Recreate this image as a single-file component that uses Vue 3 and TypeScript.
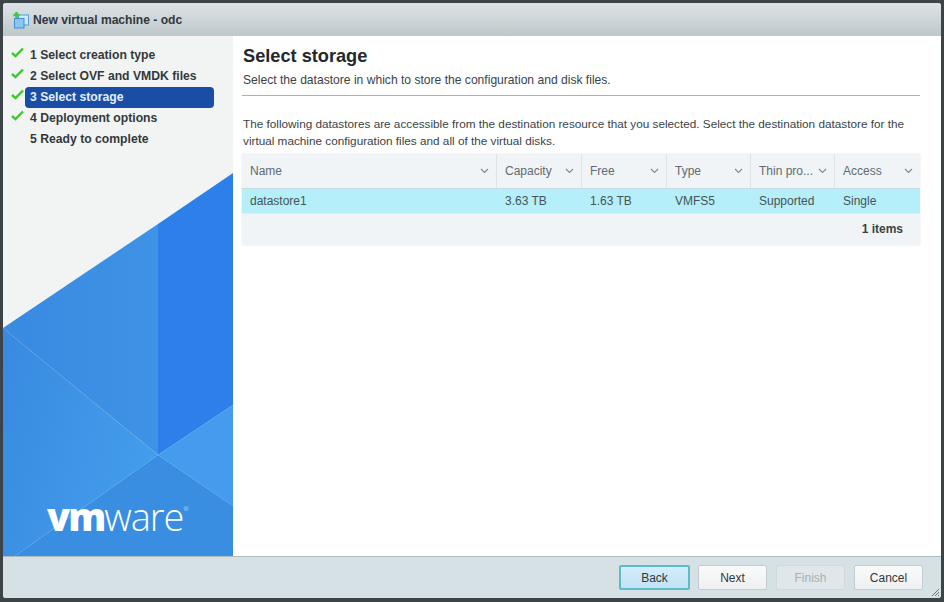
<template>
  <div class="page">
    <div class="dialog">
      <header class="title-bar">
        <svg class="vm-icon" width="20" height="20" viewBox="0 0 20 20">
          <rect x="7.5" y="5" width="10" height="10" fill="#cfe8fa" stroke="#4a9fdc" stroke-width="1" />
          <rect x="3.5" y="8.5" width="9.5" height="9.5" fill="#8cc6f0" stroke="#3d8fd0" stroke-width="1" />
          <path d="M5.5 2v6M2.5 5h6" stroke="#45c43f" stroke-width="2.4" />
        </svg>
        <span class="title-text">New virtual machine - odc</span>
      </header>

      <div class="main">
        <aside class="sidebar">
          <svg class="sidebar-art" viewBox="0 0 230 520" preserveAspectRatio="none">
            <defs>
              <linearGradient id="upperFill" x1="0" y1="0" x2="1" y2="0">
                <stop offset="0" stop-color="#378ae0" />
                <stop offset="1" stop-color="#3f93e6" />
              </linearGradient>
              <linearGradient id="lowerFill" x1="0" y1="0" x2="1" y2="0.4">
                <stop offset="0" stop-color="#378ae0" />
                <stop offset="1" stop-color="#449cec" />
              </linearGradient>
            </defs>
            <polygon points="0,292 155,188 155,419" fill="url(#upperFill)" />
            <polygon points="0,292 155,419 12,520 0,520" fill="url(#lowerFill)" />
            <polygon points="155,188 230,137 230,369 155,419" fill="#2d7fea" />
            <polygon points="155,419 230,369 230,470" fill="#459cee" />
            <polygon points="155,419 230,470 230,520 12,520" fill="#3a8ee2" />
          </svg>
          <ol class="steps">
            <li v-for="step in steps" :key="step.label" class="step">
              <svg v-if="step.done" class="check" width="13" height="11" viewBox="0 0 13 11">
                <path d="M1 6l3.5 3.2L12 1.5" fill="none" stroke="#3fc72e" stroke-width="2.4" />
              </svg>
              <span v-else class="check-space"></span>
              <span class="step-label" :class="{ active: step.active }">{{ step.label }}</span>
            </li>
          </ol>
          <div class="logo"><b>vm</b>ware<sup>®</sup></div>
        </aside>

        <section class="content">
          <h2>Select storage</h2>
          <p class="subtitle">Select the datastore in which to store the configuration and disk files.</p>
          <p class="intro">
            The following datastores are accessible from the destination resource that you selected. Select the destination datastore for the virtual machine configuration files and all of the virtual disks.
          </p>
          <div class="table">
            <div class="row head">
              <div v-for="col in columns" :key="col" class="cell">
                <span class="col-name">{{ col }}</span>
                <svg width="9" height="6" viewBox="0 0 9 6">
                  <path d="M1 1l3.5 3.5L8 1" fill="none" stroke="#7b8a90" stroke-width="1.1" />
                </svg>
              </div>
            </div>
            <div class="row selected">
              <div v-for="val in datastore" :key="val" class="cell">{{ val }}</div>
            </div>
            <div class="table-foot">1 items</div>
          </div>
        </section>
      </div>

      <footer class="footer">
        <button class="btn primary">Back</button>
        <button class="btn">Next</button>
        <button class="btn" disabled>Finish</button>
        <button class="btn">Cancel</button>
        <svg class="grip" width="9" height="9" viewBox="0 0 9 9">
          <path d="M1 8l7-7M4 8l4-4M7 8l1-1" stroke="#6d777b" stroke-width="1" />
        </svg>
      </footer>
    </div>
  </div>
</template>

<script setup lang="ts">
interface Step {
  label: string;
  done: boolean;
  active?: boolean;
}

const steps: Step[] = [
  { label: '1 Select creation type', done: true },
  { label: '2 Select OVF and VMDK files', done: true },
  { label: '3 Select storage', done: true, active: true },
  { label: '4 Deployment options', done: true },
  { label: '5 Ready to complete', done: false },
];

const columns = ['Name', 'Capacity', 'Free', 'Type', 'Thin pro...', 'Access'];
const datastore = ['datastore1', '3.63 TB', '1.63 TB', 'VMFS5', 'Supported', 'Single'];
</script>

<style>
html,
body {
  margin: 0;
  background: #3c4447;
}
</style>

<style scoped>
.page {
  box-sizing: border-box;
  width: 944px;
  height: 602px;
  padding: 3px 3px 4px 3px;
  font-family: "Liberation Sans", Arial, sans-serif;
  color: #2b3236;
}

.dialog {
  display: flex;
  flex-direction: column;
  height: 100%;
  background: #fff;
  border-radius: 3px;
  overflow: hidden;
}

.title-bar {
  display: flex;
  align-items: center;
  gap: 2px;
  height: 33px;
  padding-left: 8px;
  background: linear-gradient(#dde3e5, #bdc8cb);
  flex: none;
}

.title-text {
  font-size: 12.1px;
  font-weight: bold;
  color: #30383c;
}

.main {
  display: flex;
  flex: 1;
  min-height: 0;
}

.sidebar {
  position: relative;
  width: 230px;
  flex: none;
  background: #f2f4f4;
  overflow: hidden;
}

.sidebar-art {
  position: absolute;
  left: 0;
  top: 0;
  width: 100%;
  height: 100%;
}

.steps {
  position: relative;
  list-style: none;
  margin: 0;
  padding: 9px 0 0 8px;
}

.step {
  display: flex;
  align-items: center;
  height: 21px;
}

.check {
  width: 13px;
  height: 11px;
  margin-top: -7px;
  flex: none;
}

.check-space {
  width: 13px;
  flex: none;
}

.step-label {
  flex: 1;
  margin: 0 19px 0 1px;
  padding-left: 5px;
  height: 21px;
  line-height: 21px;
  font-size: 12.2px;
  font-weight: bold;
  color: #33393d;
  white-space: nowrap;
}

.step-label.active {
  background: #1a4da6;
  border-radius: 4px;
  color: #e6f0fb;
}

.logo {
  position: absolute;
  left: 44px;
  top: 457px;
  color: #fff;
  font-size: 38px;
  line-height: 46px;
  letter-spacing: -1px;
  font-family: "Open Sans", "Liberation Sans", sans-serif;
  font-weight: 300;
}

.logo b {
  font-weight: 800;
  letter-spacing: -2px;
}

.logo sup {
  font-size: 6px;
  line-height: 0;
  vertical-align: 20px;
  letter-spacing: 0;
}

.content {
  flex: 1;
  min-width: 0;
  padding: 9px 21px 0 9px;
}

h2 {
  margin: 0 0 0 1px;
  font-size: 18.2px;
  line-height: 22px;
  font-weight: bold;
  color: #22292d;
}

.subtitle {
  margin: 6px 0 0;
  padding: 0 0 7px 1px;
  border-bottom: 1px solid #a9b4b8;
  font-size: 12.1px;
  line-height: 15px;
  color: #3a4246;
}

.intro {
  margin: 19px 0 0;
  padding-left: 1px;
  font-size: 11.75px;
  line-height: 17px;
  color: #3a4246;
}

.table {
  margin: 5px 0 0 0;
  background: #f0f4f6;
  box-shadow: 0 0 2px #dfe5e8;
  font-size: 12px;
}

.row {
  display: grid;
  grid-template-columns: 255px 85px 85px 84px 84px 85px;
}

.head {
  height: 35px;
  border-bottom: 1px solid #c6dbe4;
  box-sizing: border-box;
  color: #5f6b71;
}

.head .cell {
  display: flex;
  align-items: center;
  justify-content: space-between;
  padding: 0 7px 0 8px;
  border-right: 1px solid #dde3e6;
}

.head .cell:last-child {
  border-right: none;
}

.col-name {
  white-space: nowrap;
}

.selected {
  height: 24px;
  background: #b5eff9;
  color: #465358;
}

.selected .cell {
  padding-left: 8px;
  line-height: 24px;
}

.table-foot {
  height: 32px;
  line-height: 30px;
  padding-right: 17px;
  text-align: right;
  font-weight: bold;
  color: #3a4246;
  border-top: 1px solid #e4eaed;
  box-sizing: border-box;
}

.footer {
  position: relative;
  display: flex;
  justify-content: flex-end;
  align-items: flex-start;
  gap: 9px;
  height: 42px;
  box-sizing: border-box;
  flex: none;
  padding: 8px 18px 0 0;
  background: #d6e1e6;
  border-top: 1px solid #aebbc1;
}

.btn {
  box-sizing: border-box;
  width: 69px;
  height: 25px;
  padding: 0;
  background: linear-gradient(#fafafa, #eef0f1);
  border: 1px solid #c4ccd0;
  border-radius: 2px;
  font-family: inherit;
  font-size: 12px;
  color: #30383c;
}

.btn.primary {
  width: 71px;
  margin-right: -1px;
  background: linear-gradient(#d3edfb, #c2e2f5);
  border: 2px solid #5cbcc7;
}

.btn:disabled {
  background: #dfe7ea;
  border-color: #d0d9dc;
  color: #a7b0b4;
}

.grip {
  position: absolute;
  right: 1px;
  bottom: 1px;
}
</style>
